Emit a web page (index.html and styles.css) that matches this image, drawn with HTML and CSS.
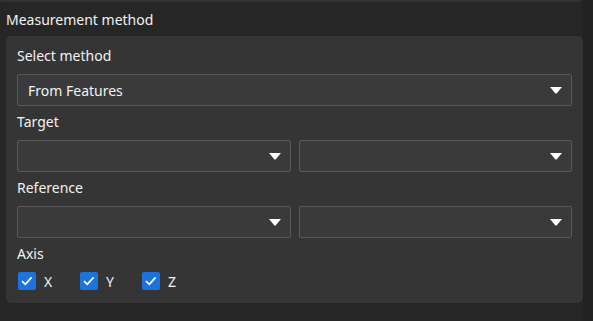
FILE: index.html
```html
<!DOCTYPE html>
<html>
<head>
    <title>Measurement method</title>
    <link rel="stylesheet" href="styles.css">
</head>
<body>
    <div class="page">
        <div class="main">
            <div class="top-panel"></div>
            <div class="section-title">Measurement method</div>
            <div class="card">
                <div class="label first">Select method</div>
                <div class="combo">
                    <span class="combo-text">From Features</span>
                    <svg class="arrow" width="12" height="7" viewBox="0 0 12 7"><path d="M0 0 H12 L7 6 Q6 7 5 6 Z" fill="#ffffff"/></svg>
                </div>

                <div class="label">Target</div>
                <div class="combo-row">
                    <div class="combo">
                        <span class="combo-text"></span>
                        <svg class="arrow" width="12" height="7" viewBox="0 0 12 7"><path d="M0 0 H12 L7 6 Q6 7 5 6 Z" fill="#ffffff"/></svg>
                    </div>
                    <div class="combo">
                        <span class="combo-text"></span>
                        <svg class="arrow" width="12" height="7" viewBox="0 0 12 7"><path d="M0 0 H12 L7 6 Q6 7 5 6 Z" fill="#ffffff"/></svg>
                    </div>
                </div>

                <div class="label">Reference</div>
                <div class="combo-row">
                    <div class="combo">
                        <span class="combo-text"></span>
                        <svg class="arrow" width="12" height="7" viewBox="0 0 12 7"><path d="M0 0 H12 L7 6 Q6 7 5 6 Z" fill="#ffffff"/></svg>
                    </div>
                    <div class="combo">
                        <span class="combo-text"></span>
                        <svg class="arrow" width="12" height="7" viewBox="0 0 12 7"><path d="M0 0 H12 L7 6 Q6 7 5 6 Z" fill="#ffffff"/></svg>
                    </div>
                </div>

                <div class="label">Axis</div>
                <div class="axis-row">
                    <div class="check-item">
                        <span class="checkbox"><svg width="18" height="18" viewBox="0 0 18 18"><path d="M4 9.2 L7.3 12.3 L13.6 5.4" fill="none" stroke="#ffffff" stroke-width="1.8"/></svg></span>
                        <span class="check-text">X</span>
                    </div>
                    <div class="check-item">
                        <span class="checkbox"><svg width="18" height="18" viewBox="0 0 18 18"><path d="M4 9.2 L7.3 12.3 L13.6 5.4" fill="none" stroke="#ffffff" stroke-width="1.8"/></svg></span>
                        <span class="check-text">Y</span>
                    </div>
                    <div class="check-item">
                        <span class="checkbox"><svg width="18" height="18" viewBox="0 0 18 18"><path d="M4 9.2 L7.3 12.3 L13.6 5.4" fill="none" stroke="#ffffff" stroke-width="1.8"/></svg></span>
                        <span class="check-text">Z</span>
                    </div>
                </div>
            </div>
        </div>
        <div class="side-strip"></div>
    </div>
</body>
</html>
```
FILE: styles.css
```css
body {
    margin: 0;
    background-color: #262626;
    color: #f2f2f2;
    font-family: "Noto Sans", "Open Sans", sans-serif;
    font-size: 14px;
}

.page {
    display: flex;
    height: 321px;
}

.main {
    width: 583px;
}

.side-strip {
    flex: 1;
    background-color: #222222;
}

.top-panel {
    height: 2px;
    margin-right: 2px;
    background-color: #333333;
    border-radius: 0 0 3px 3px;
}

.section-title {
    height: 20px;
    line-height: 20px;
    padding: 8px 0 0 6px;
    margin-bottom: 6px;
}

.card {
    margin-left: 6px;
    padding: 10px 11px 13px 11px;
    background-color: #353535;
    border-radius: 5px;
}

.label {
    height: 20px;
    line-height: 20px;
    margin: 6px 0 8px 0;
}

.label.first {
    margin-top: 0;
}

.combo-row {
    display: flex;
    gap: 8px;
}

.combo {
    flex: 1;
    display: flex;
    align-items: center;
    height: 30px;
    padding: 0 9px 0 10px;
    background-color: #3a3a3a;
    border: 1px solid #5a5a5a;
    border-radius: 2px;
}

.combo-text {
    flex: 1;
}

.arrow {
    display: block;
}

.axis-row {
    display: flex;
    padding-left: 1px;
}

.check-item {
    display: flex;
    align-items: center;
    width: 62px;
    height: 18px;
}

.checkbox {
    width: 18px;
    height: 18px;
    background-color: #1a74dc;
    border-radius: 2px;
    margin-right: 8px;
}

.checkbox svg {
    display: block;
}
```
